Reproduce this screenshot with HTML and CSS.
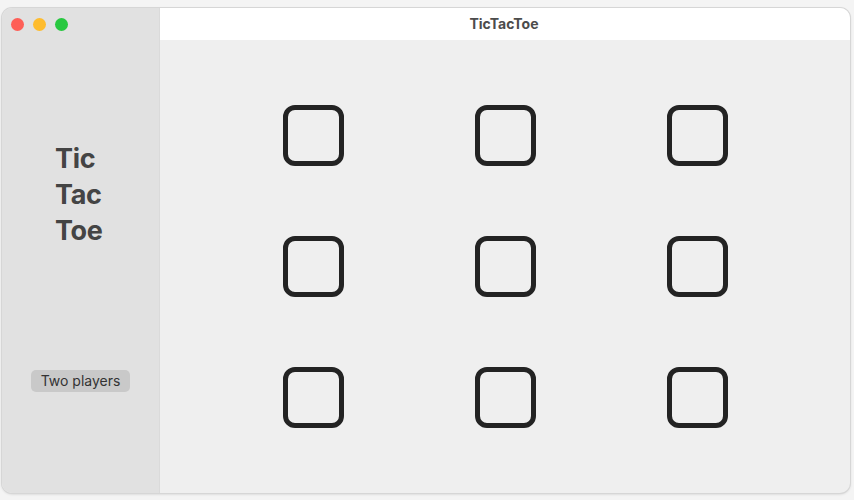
FILE: index.html
```html
<!DOCTYPE html>
<html>
<head>
<meta charset="utf-8">
<link rel="stylesheet" href="styles.css">
</head>
<body>
<div class="window">
  <aside class="sidebar">
    <div class="lights">
      <span class="light red"></span>
      <span class="light yellow"></span>
      <span class="light green"></span>
    </div>
    <h1 class="logo">Tic<br>Tac<br>Toe</h1>
    <button class="mode">Two players</button>
  </aside>
  <main class="main">
    <header class="titlebar">TicTacToe</header>
    <section class="board-wrap">
      <div class="board">
        <div class="cell"><span class="box"></span></div>
        <div class="cell"><span class="box"></span></div>
        <div class="cell"><span class="box"></span></div>
        <div class="cell"><span class="box"></span></div>
        <div class="cell"><span class="box"></span></div>
        <div class="cell"><span class="box"></span></div>
        <div class="cell"><span class="box"></span></div>
        <div class="cell"><span class="box"></span></div>
        <div class="cell"><span class="box"></span></div>
      </div>
    </section>
  </main>
</div>
</body>
</html>
```

FILE: styles.css
```css
html, body {
  margin: 0;
  padding: 0;
}
body {
  width: 854px;
  height: 500px;
  background: #f4f4f4;
  padding: 8px 4px 7px 2px;
  box-sizing: border-box;
  font-family: Inter, "Liberation Sans", sans-serif;
}
.window {
  width: 848px;
  height: 485px;
  border-radius: 10px;
  overflow: hidden;
  display: flex;
  box-shadow: 0 0 0 1px #d6d6d6, 0 1px 3px rgba(0,0,0,0.18);
  background: #efefef;
}
.sidebar {
  width: 158px;
  flex: none;
  background: #e1e1e1;
  border-right: 1px solid #dadada;
  box-sizing: border-box;
  display: flex;
  flex-direction: column;
  padding: 10px 0 0 0;
}
.lights {
  display: flex;
  gap: 9px;
  padding-left: 9px;
}
.light {
  width: 13px;
  height: 13px;
  border-radius: 50%;
  display: block;
}
.red { background: #fe5f57; }
.yellow { background: #febc2e; }
.green { background: #28c840; }
.logo {
  margin: 110px 0 0 53px;
  font-size: 27px;
  line-height: 36px;
  font-weight: 700;
  color: #444444;
  letter-spacing: -0.3px;
}
.mode {
  margin: 121px 0 0 29px;
  width: 99px;
  height: 22px;
  border: none;
  border-radius: 5px;
  background: #c9c9c9;
  color: #333;
  font-family: Inter, "Liberation Sans", sans-serif;
  font-size: 14px;
  padding: 0;
  line-height: 22px;
}
.main {
  flex: 1;
  display: flex;
  flex-direction: column;
}
.titlebar {
  height: 32px;
  background: #ffffff;
  text-align: center;
  font-size: 14px;
  font-weight: 700;
  color: #4c4c4c;
  line-height: 31px;
  padding-right: 2px;
}
.board-wrap {
  flex: 1;
  display: flex;
  align-items: center;
  justify-content: center;
}
.board {
  display: grid;
  grid-template-columns: repeat(3, 192px);
  grid-template-rows: repeat(3, 131px);
  margin-top: -1px;
}
.cell {
  display: flex;
  align-items: center;
  justify-content: center;
}
.box {
  display: block;
  width: 61px;
  height: 61px;
  box-sizing: border-box;
  border: 5px solid #232323;
  border-radius: 12px;
}
```
